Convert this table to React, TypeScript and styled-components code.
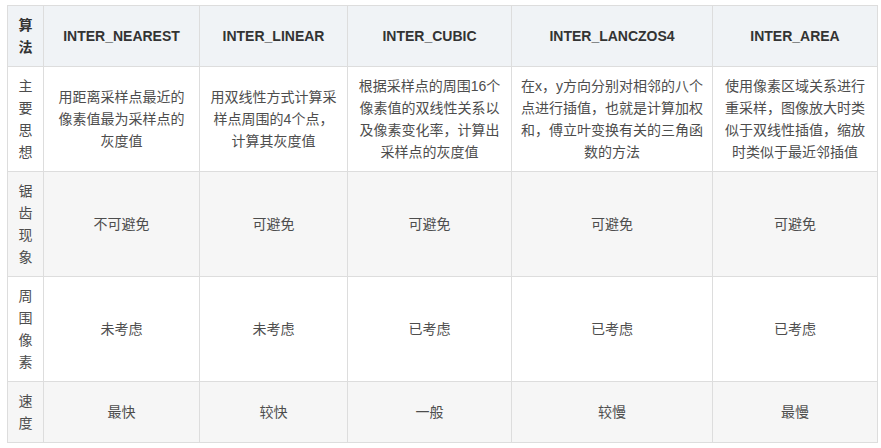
import styled, { createGlobalStyle } from 'styled-components';

const GlobalStyle = createGlobalStyle`
  body {
    margin: 0;
    background: #ffffff;
    font-family: "Liberation Sans", "Noto Sans CJK SC", sans-serif;
  }
`;

const Page = styled.div`
  padding: 5px 0 0 7px;
`;

const Table = styled.table`
  border-collapse: collapse;
  table-layout: fixed;
  width: 870px;
  font-size: 14px;
  line-height: 22px;
  color: #4d4d4d;
`;

const HeadCell = styled.th`
  background: #f0f3f6;
  border: 1px solid #dddddd;
  padding: 8px;
  font-weight: bold;
  color: #333333;
  text-align: center;
  vertical-align: middle;
`;

const Row = styled.tr<{ $alt: boolean }>`
  background: ${({ $alt }) => ($alt ? '#f6f6f6' : '#ffffff')};
`;

const Cell = styled.td`
  border: 1px solid #dddddd;
  padding: 8px;
  text-align: center;
  vertical-align: middle;
`;

const widths = [36, 156, 148, 164, 201, 165];

const headers = ['算法', 'INTER_NEAREST', 'INTER_LINEAR', 'INTER_CUBIC', 'INTER_LANCZOS4', 'INTER_AREA'];

const rows = [
  [
    '主要思想',
    '用距离采样点最近的像素值最为采样点的灰度值',
    '用双线性方式计算采样点周围的4个点，计算其灰度值',
    '根据采样点的周围16个像素值的双线性关系以及像素变化率，计算出采样点的灰度值',
    '在x，y方向分别对相邻的八个点进行插值，也就是计算加权和，傅立叶变换有关的三角函数的方法',
    '使用像素区域关系进行重采样，图像放大时类似于双线性插值，缩放时类似于最近邻插值',
  ],
  ['锯齿现象', '不可避免', '可避免', '可避免', '可避免', '可避免'],
  ['周围像素', '未考虑', '未考虑', '已考虑', '已考虑', '已考虑'],
  ['速度', '最快', '较快', '一般', '较慢', '最慢'],
];

export default function App() {
  return (
    <Page>
      <GlobalStyle />
      <Table>
        <colgroup>
          {widths.map((w, i) => (
            <col key={i} style={{ width: w }} />
          ))}
        </colgroup>
        <thead>
          <tr>
            {headers.map((h) => (
              <HeadCell key={h}>{h}</HeadCell>
            ))}
          </tr>
        </thead>
        <tbody>
          {rows.map((r, i) => (
            <Row key={r[0]} $alt={i % 2 === 1}>
              {r.map((c, j) => (
                <Cell key={j}>{c}</Cell>
              ))}
            </Row>
          ))}
        </tbody>
      </Table>
    </Page>
  );
}
